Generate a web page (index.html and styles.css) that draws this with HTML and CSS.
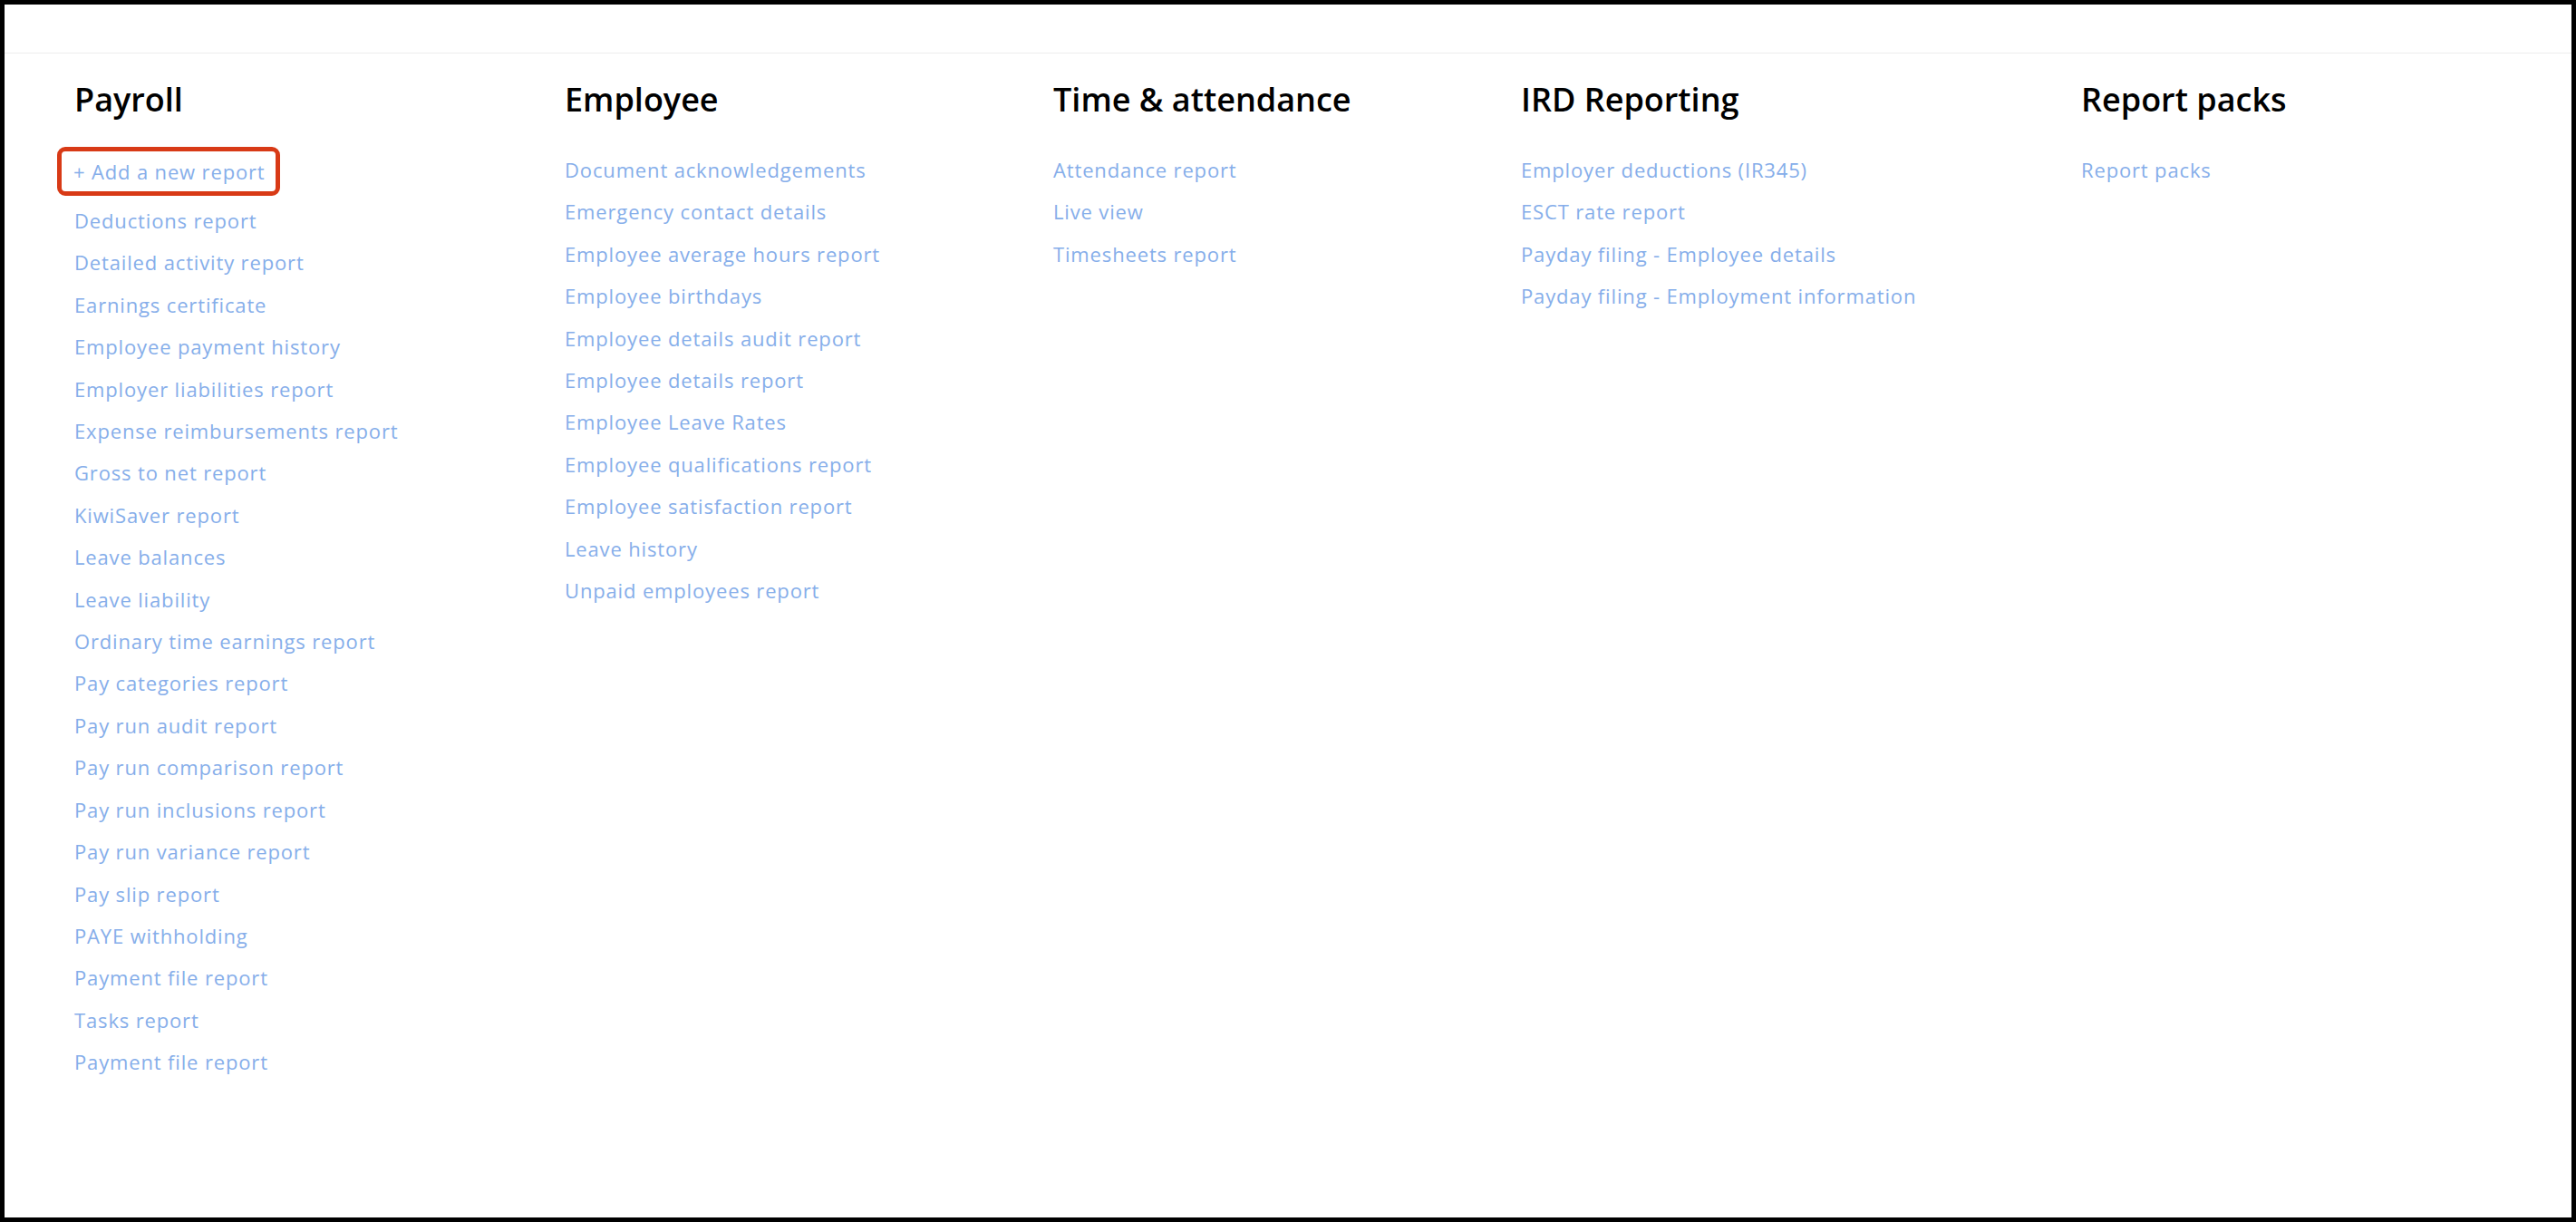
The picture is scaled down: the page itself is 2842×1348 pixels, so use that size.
FILE: index.html
```html
<!DOCTYPE html>
<html lang="en">
  <head>
    <meta charset="UTF-8" />
    <meta name="viewport" content="width=device-width, initial-scale=1.0" />
    <title>Reports</title>
    <link rel="stylesheet" href="styles.css">
  </head>
  <body>
    <div class="frame">
      <header class="topbar"></header>
      <main class="reports">
        <section class="report-group">
          <h2>Payroll</h2>
          <ul class="report-list">
            <li><a href="#" class="add-report">+ Add a new report</a></li>
            <li><a href="#">Deductions report</a></li>
            <li><a href="#">Detailed activity report</a></li>
            <li><a href="#">Earnings certificate</a></li>
            <li><a href="#">Employee payment history</a></li>
            <li><a href="#">Employer liabilities report</a></li>
            <li><a href="#">Expense reimbursements report</a></li>
            <li><a href="#">Gross to net report</a></li>
            <li><a href="#">KiwiSaver report</a></li>
            <li><a href="#">Leave balances</a></li>
            <li><a href="#">Leave liability</a></li>
            <li><a href="#">Ordinary time earnings report</a></li>
            <li><a href="#">Pay categories report</a></li>
            <li><a href="#">Pay run audit report</a></li>
            <li><a href="#">Pay run comparison report</a></li>
            <li><a href="#">Pay run inclusions report</a></li>
            <li><a href="#">Pay run variance report</a></li>
            <li><a href="#">Pay slip report</a></li>
            <li><a href="#">PAYE withholding</a></li>
            <li><a href="#">Payment file report</a></li>
            <li><a href="#">Tasks report</a></li>
            <li><a href="#">Payment file report</a></li>
          </ul>
        </section>
        <section class="report-group">
          <h2>Employee</h2>
          <ul class="report-list">
            <li><a href="#">Document acknowledgements</a></li>
            <li><a href="#">Emergency contact details</a></li>
            <li><a href="#">Employee average hours report</a></li>
            <li><a href="#">Employee birthdays</a></li>
            <li><a href="#">Employee details audit report</a></li>
            <li><a href="#">Employee details report</a></li>
            <li><a href="#">Employee Leave Rates</a></li>
            <li><a href="#">Employee qualifications report</a></li>
            <li><a href="#">Employee satisfaction report</a></li>
            <li><a href="#">Leave history</a></li>
            <li><a href="#">Unpaid employees report</a></li>
          </ul>
        </section>
        <section class="report-group">
          <h2>Time &amp; attendance</h2>
          <ul class="report-list">
            <li><a href="#">Attendance report</a></li>
            <li><a href="#">Live view</a></li>
            <li><a href="#">Timesheets report</a></li>
          </ul>
        </section>
        <section class="report-group">
          <h2>IRD Reporting</h2>
          <ul class="report-list">
            <li><a href="#">Employer deductions (IR345)</a></li>
            <li><a href="#">ESCT rate report</a></li>
            <li><a href="#">Payday filing - Employee details</a></li>
            <li><a href="#">Payday filing - Employment information</a></li>
          </ul>
        </section>
        <section class="report-group">
          <h2>Report packs</h2>
          <ul class="report-list">
            <li><a href="#">Report packs</a></li>
          </ul>
        </section>
      </main>
    </div>
  </body>
</html>
```

FILE: styles.css
```css
html {
  box-sizing: border-box;
  font-family: "Open Sans", "Liberation Sans", sans-serif;
  font-size: 16px;
}

*,
*:before,
*:after {
  box-sizing: inherit;
}

body {
  margin: 0;
  background-color: #fff;
}

.frame {
  height: 100vh;
  border: 5px solid #000;
  display: flex;
  flex-direction: column;
}

.topbar {
  height: 54px;
  border-bottom: 1px solid #ededed;
}

.reports {
  flex-grow: 1;
  display: grid;
  grid-template-columns: 541px 539px 516px 618px auto;
  align-items: start;
  padding: 27px 0 0 77px;
}

.report-group h2 {
  margin: 0 0 30px;
  font-size: 36px;
  line-height: 48px;
  font-weight: 600;
  color: #000;
}

.report-list {
  list-style: none;
  margin: 0;
  padding: 0;
}

.report-list li {
  font-size: 22px;
  line-height: 46.4px;
  letter-spacing: 0.85px;
  white-space: nowrap;
}

.report-list a {
  color: #86aeea;
  text-decoration: none;
}

.report-list .add-report {
  display: inline-block;
  margin: -2px 0 4px -19px;
  padding: 2px 11px 2px 13px;
  border: 5px solid #d83a16;
  border-radius: 9px;
  line-height: 40px;
}
```
